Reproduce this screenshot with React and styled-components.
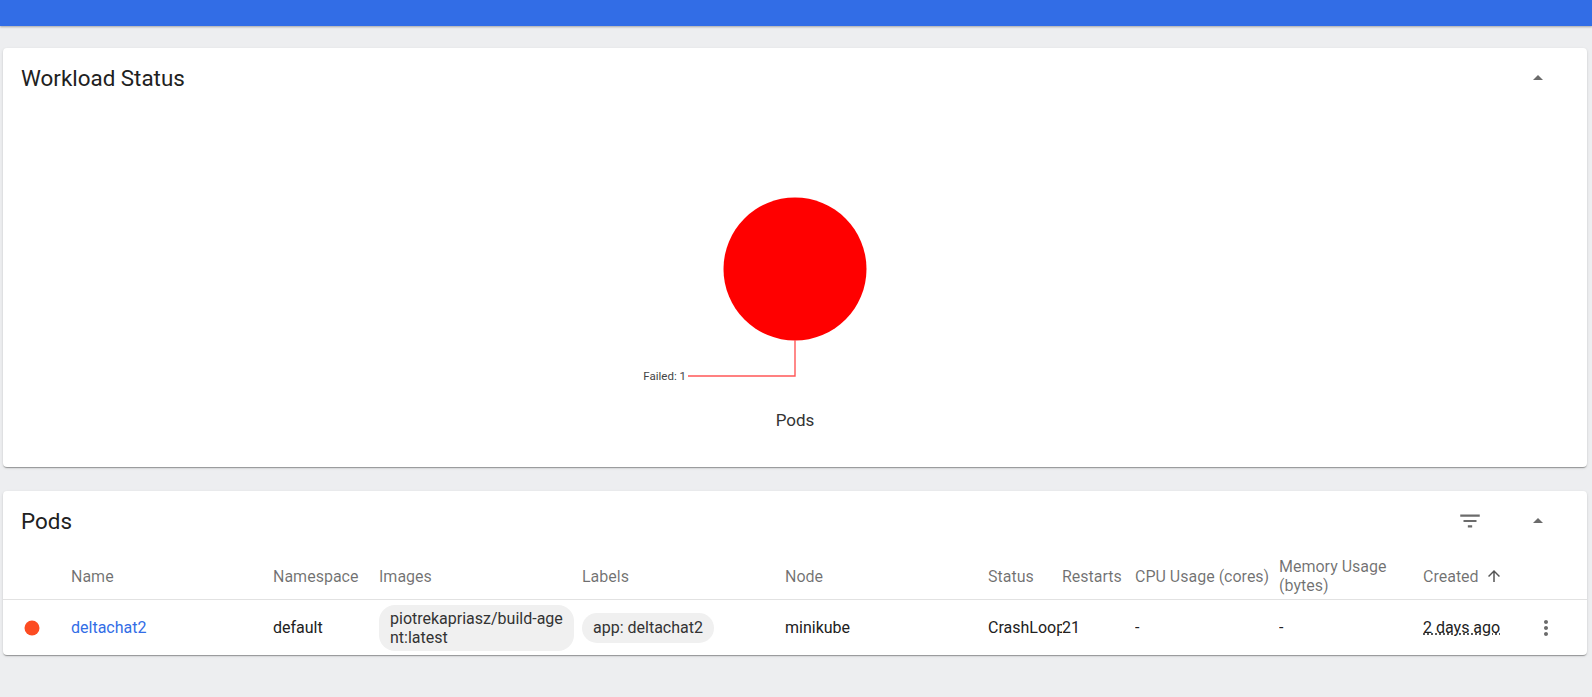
import React from "react";
import styled, { createGlobalStyle } from "styled-components";

const GlobalStyle = createGlobalStyle`
  html, body { margin: 0; padding: 0; background: #edeef0; }
  body { font-family: Roboto, "Liberation Sans", Arial, sans-serif; color: #212121; }
  * { box-sizing: border-box; }
`;

const Page = styled.div`
  min-height: 697px;
  background: #edeef0;
`;

const TopBar = styled.header`
  height: 26px;
  background: #326de6;
  box-shadow: 0 1px 2px rgba(0, 0, 0, 0.3);
  position: relative;
  z-index: 1;
`;

const Content = styled.main`
  display: flex;
  flex-direction: column;
  gap: 24px;
  padding: 22px 5px 40px 3px;
`;

const Card = styled.section`
  background: #fff;
  border-radius: 4px;
  box-shadow: 0 2px 1px -1px rgba(0, 0, 0, 0.2), 0 1px 1px 0 rgba(0, 0, 0, 0.14),
    0 1px 3px 0 rgba(0, 0, 0, 0.12);
  overflow: hidden;
`;

const CardHeader = styled.div`
  height: 60px;
  display: flex;
  align-items: center;
  padding: 0 29px 0 18px;
  gap: 28px;
`;

const CardTitle = styled.h2`
  flex: 1;
  margin: 0;
  font-size: 22.4px;
  font-weight: 400;
  color: #212121;
`;

const IconButton = styled.button`
  width: 40px;
  height: 40px;
  border: 0;
  padding: 0;
  background: transparent;
  display: flex;
  align-items: center;
  justify-content: center;
  color: rgba(0, 0, 0, 0.58);
  cursor: pointer;
  svg { fill: currentColor; }
`;

const ChartBody = styled.div`
  display: flex;
  flex-direction: column;
  align-items: center;
  padding-bottom: 37px;
`;

const ChartCaption = styled.div`
  margin-top: 12px;
  font-size: 17px;
  line-height: 20px;
  color: #333;
`;

const Table = styled.div`
  display: grid;
  grid-template-columns: 68px 202px 106px 203px 203px 203px 74px 73px 144px 144px 100px 46px 1fr;
`;

const HeaderCell = styled.div`
  min-height: 49px;
  padding-top: 2px;
  display: flex;
  align-items: center;
  gap: 6px;
  padding-right: 8px;
  font-size: 16px;
  line-height: 19px;
  color: rgba(0, 0, 0, 0.56);
  border-bottom: 1px solid #e2e2e2;
  svg { fill: #555; flex: none; }
`;

const Cell = styled.div`
  height: 55px;
  display: flex;
  align-items: center;
  justify-content: ${(p) => p.$justify || "flex-start"};
  padding-left: ${(p) => p.$pl ?? 0}px;
  padding-right: ${(p) => p.$pr ?? 8}px;
  font-size: 16px;
  line-height: 19px;
  color: #212121;
  overflow: hidden;
  white-space: ${(p) => (p.$nowrap ? "nowrap" : "normal")};
`;

const NameLink = styled.a`
  color: #326de6;
  text-decoration: none;
`;

const Chip = styled.span`
  display: inline-flex;
  align-items: center;
  min-height: 30px;
  padding: 4px 11px;
  border-radius: 16px;
  background: #f0f0f0;
  color: #333;
  font-size: 16px;
  line-height: 19px;
  word-break: break-all;
`;

const Dotted = styled.span`
  text-decoration: underline dotted;
  text-underline-offset: 1px;
`;

const ArrowDropUp = () => (
  <svg width="24" height="24" viewBox="0 0 24 24">
    <path d="M7 14l5-5 5 5z" />
  </svg>
);

const FilterList = () => (
  <svg width="26" height="26" viewBox="0 0 24 24">
    <path d="M10 18h4v-2h-4v2zM3 6v2h18V6H3zm3 7h12v-2H6v2z" />
  </svg>
);

const MoreVert = () => (
  <svg width="24" height="24" viewBox="0 0 24 24">
    <path d="M12 8c1.1 0 2-.9 2-2s-.9-2-2-2-2 .9-2 2 .9 2 2 2zm0 2c-1.1 0-2 .9-2 2s.9 2 2 2 2-.9 2-2-.9-2-2-2zm0 6c-1.1 0-2 .9-2 2s.9 2 2 2 2-.9 2-2-.9-2-2-2z" />
  </svg>
);

const ArrowUpward = () => (
  <svg width="18" height="18" viewBox="0 0 24 24">
    <path d="M4 12l1.41 1.41L11 7.83V20h2V7.83l5.58 5.59L20 12l-8-8-8 8z" />
  </svg>
);

const StatusDot = () => (
  <svg width="16" height="16" viewBox="0 0 16 16">
    <circle cx="8" cy="8" r="7.5" fill="#fc4c22" />
  </svg>
);

const PieChart = () => (
  <svg width="320" height="290" viewBox="0 0 320 290">
    <circle cx="160" cy="161" r="71.5" fill="#ff0000" />
    <polyline
      points="160,232 160,268 53,268"
      fill="none"
      stroke="#ff5757"
      strokeWidth="1.4"
    />
    <text
      x="51"
      y="272"
      textAnchor="end"
      fontSize="11.5"
      fill="#444"
      fontFamily="Roboto, 'Liberation Sans', sans-serif"
    >
      Failed: 1
    </text>
  </svg>
);

const headers = [
  { label: "" },
  { label: "Name" },
  { label: "Namespace" },
  { label: "Images" },
  { label: "Labels" },
  { label: "Node" },
  { label: "Status" },
  { label: "Restarts" },
  { label: "CPU Usage (cores)" },
  { label: "Memory Usage (bytes)" },
  { label: "Created", icon: true },
  { label: "" },
  { label: "" },
];

export default function App() {
  return (
    <Page>
      <GlobalStyle />
      <TopBar />
      <Content>
        <Card>
          <CardHeader>
            <CardTitle>Workload Status</CardTitle>
            <IconButton aria-label="collapse">
              <ArrowDropUp />
            </IconButton>
          </CardHeader>
          <ChartBody>
            <PieChart />
            <ChartCaption>Pods</ChartCaption>
          </ChartBody>
        </Card>

        <Card>
          <CardHeader>
            <CardTitle>Pods</CardTitle>
            <IconButton aria-label="filter">
              <FilterList />
            </IconButton>
            <IconButton aria-label="collapse">
              <ArrowDropUp />
            </IconButton>
          </CardHeader>
          <Table>
            {headers.map((h, i) => (
              <HeaderCell key={i}>
                {h.label}
                {h.icon && <ArrowUpward />}
              </HeaderCell>
            ))}

            <Cell $pl={21}>
              <StatusDot />
            </Cell>
            <Cell>
              <NameLink href="#">deltachat2</NameLink>
            </Cell>
            <Cell>default</Cell>
            <Cell>
              <Chip>piotrekapriasz/build-agent:latest</Chip>
            </Cell>
            <Cell>
              <Chip>app: deltachat2</Chip>
            </Cell>
            <Cell>minikube</Cell>
            <Cell $pr={6} $nowrap>
              CrashLoopBackOff
            </Cell>
            <Cell>21</Cell>
            <Cell>-</Cell>
            <Cell>-</Cell>
            <Cell $nowrap>
              <Dotted>2 days ago</Dotted>
            </Cell>
            <Cell $justify="center" $pr={0}>
              <IconButton aria-label="menu">
                <MoreVert />
              </IconButton>
            </Cell>
            <Cell />
          </Table>
        </Card>
      </Content>
    </Page>
  );
}
